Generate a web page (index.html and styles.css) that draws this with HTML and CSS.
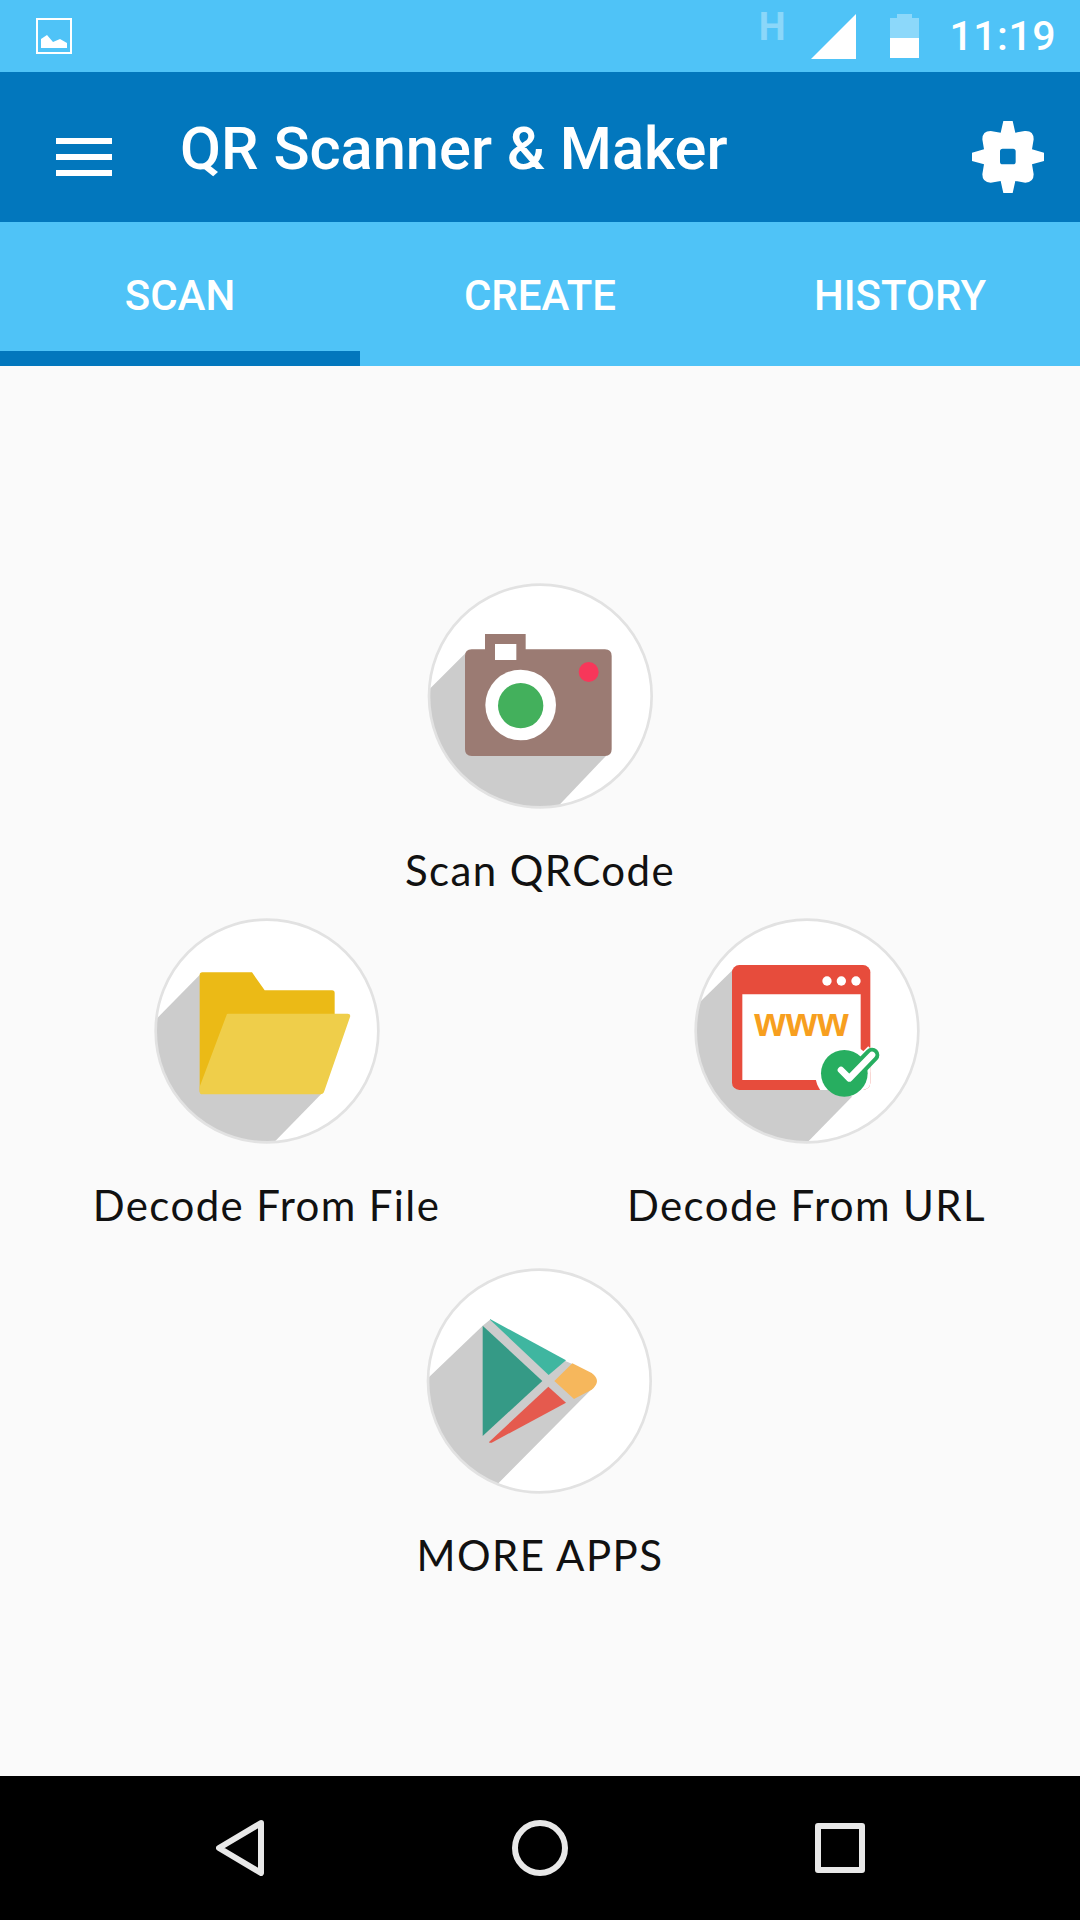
FILE: index.html
```html
<!DOCTYPE html>
<html lang="en">
<head>
  <meta charset="UTF-8">
  <title>QR Scanner &amp; Maker</title>
  <link rel="stylesheet" href="styles.css">
</head>
<body>

  <div class="status-bar">
    <svg class="ic-image" viewBox="0 0 36 36"><path class="ic-image-frame" d="M1 1h34v34H1z"/><path class="ic-white" d="M5 30V21l6-4 6 7 7-3 7 4v5z"/></svg>
    <span class="status-h">H</span>
    <svg class="ic-signal" viewBox="0 0 45 45"><path class="ic-white" d="M45 0v45H0z"/></svg>
    <svg class="ic-battery" viewBox="0 0 29 44"><path class="ic-battery-empty" d="M7 0h15v4h7v20H0V4h7z"/><path class="ic-white" d="M0 24h29v20H0z"/></svg>
    <span class="status-time">11:19</span>
  </div>

  <header class="app-bar">
    <div class="menu-btn"><span></span><span></span><span></span></div>
    <h1 class="app-title">QR Scanner &amp; Maker</h1>
    <svg class="ic-gear" viewBox="0 0 216 216"><path class="ic-white" fill-rule="evenodd" d="M94 0h28l8 35 28-5q27-2 27 25l-5 30 36 10v25l-36 10 5 30q0 25-25 25l-30-5-8 36H94l-8-36-30 5q-25 0-25-25l5-30-36-10V95l36-10-5-30q0-25 25-25l30 5zM92 83q-8 0-8 8v31q0 8 8 8h31q8 0 8-8V91q0-8-8-8z"/></svg>
  </header>

  <nav class="tabs">
    <div class="tab tab-active">SCAN</div>
    <div class="tab">CREATE</div>
    <div class="tab">HISTORY</div>
  </nav>

  <main class="content">
    <div class="row">
      <div class="action">
        <svg class="action-icon" viewBox="0 0 780 750">
          <clipPath id="clipCamera"><circle cx="391" cy="378" r="334"/></clipPath>
          <circle class="disc" cx="391" cy="378" r="334"/>
          <path class="shade" clip-path="url(#clipCamera)" d="M58 358 170 246 600 545 445 708 200 760 0 500z"/>
          <circle class="disc-line" cx="391" cy="378" r="334"/>
          <path fill="#9b7b73" d="M225 192h122v46h238q20 0 20 20v280q0 20-20 20H185q-20 0-20-20V258q0-20 20-20h40z"/>
          <path fill="#fff" d="M255 222h64v48h-64z"/>
          <circle fill="#fff" cx="332" cy="405" r="106"/>
          <circle fill="#43b05c" cx="332" cy="407" r="68"/>
          <circle fill="#f7375a" cx="536" cy="306" r="30"/>
        </svg>
        <div class="action-label">Scan QRCode</div>
      </div>
    </div>

    <div class="row row-two">
      <div class="action">
        <svg class="action-icon" viewBox="-10 0 780 750">
          <clipPath id="clipFolder"><circle cx="380" cy="378" r="334"/></clipPath>
          <circle class="disc" cx="380" cy="378" r="334"/>
          <path class="shade" clip-path="url(#clipFolder)" d="M48 342 180 208 545 565 405 708 200 760 0 500z"/>
          <circle class="disc-line" cx="380" cy="378" r="334"/>
          <path fill="#ebba16" d="M186 202h149l38 54h202q8 0 8 8v70L178 560V210q0-8 8-8z"/>
          <path fill="#efce4a" d="M262 326h360q10 0 7 10l-77 222q-3 10-12 10H186q-8 0-8-8v-15l80-213q1-6 4-6z"/>
        </svg>
        <div class="action-label">Decode From File</div>
      </div>
      <div class="action">
        <svg class="action-icon" viewBox="-10 0 780 750">
          <clipPath id="clipWeb"><circle cx="380" cy="378" r="334"/></clipPath>
          <clipPath id="clipWindow"><rect x="155" y="180" width="415" height="375" rx="22"/></clipPath>
          <circle class="disc" cx="380" cy="378" r="334"/>
          <path class="shade" clip-path="url(#clipWeb)" d="M55 295 160 192 515 575 385 708 200 760 0 500z"/>
          <circle class="disc-line" cx="380" cy="378" r="334"/>
          <rect fill="#e74c3c" x="155" y="180" width="415" height="375" rx="22"/>
          <path fill="#fff" d="M186 268h355v257H186z"/>
          <circle fill="#fff" cx="440" cy="228" r="14"/>
          <circle fill="#fff" cx="483" cy="228" r="14"/>
          <circle fill="#fff" cx="527" cy="228" r="14"/>
          <text class="www" x="222" y="393" textLength="283" lengthAdjust="spacingAndGlyphs">www</text>
          <g clip-path="url(#clipWindow)">
            <circle fill="#fff" cx="492" cy="505" r="88"/>
            <path fill="none" stroke="#fff" stroke-width="60" d="M515 515 585 445"/>
          </g>
          <circle fill="#27ae60" cx="492" cy="505" r="70"/>
          <path fill="none" stroke="#27ae60" stroke-width="44" stroke-linecap="round" stroke-linejoin="round" d="M482 495l25 25 68-70"/>
          <path fill="none" stroke="#fff" stroke-width="20" stroke-linecap="round" stroke-linejoin="round" d="M482 495l25 25 68-70"/>
        </svg>
        <div class="action-label">Decode From URL</div>
      </div>
    </div>

    <div class="row">
      <div class="action">
        <svg class="action-icon" viewBox="0 0 780 750">
          <clipPath id="clipPlay"><circle cx="388" cy="378" r="334"/></clipPath>
          <circle class="disc" cx="388" cy="378" r="334"/>
          <path class="shade" clip-path="url(#clipPlay)" d="M55 368 218 212 240 194 466 318 487 327 545 356 552 395 265 685 200 760 0 500z"/>
          <circle class="disc-line" cx="388" cy="378" r="334"/>
          <path fill="#359a86" d="M218 212 397 378 218 543z"/>
          <path fill="#3fb6a0" d="M240 192 468 316 416 360 240 194z"/>
          <path fill="#f6b75c" d="M487 325 545 354Q577 378 545 404L492 432 433 378z"/>
          <path fill="#e55a4e" d="M415 395 468 443 245 563Q235 565 238 560z"/>
        </svg>
        <div class="action-label">MORE APPS</div>
      </div>
    </div>
  </main>

  <footer class="nav-bar">
    <svg class="nav-back" viewBox="0 0 48 56"><path class="nav-stroke" d="M45 3 3 28 45 53z"/></svg>
    <svg class="nav-home" viewBox="0 0 56 56"><circle class="nav-stroke" cx="28" cy="28" r="25"/></svg>
    <svg class="nav-recent" viewBox="0 0 50 50"><path class="nav-stroke" d="M3 3h44v44H3z"/></svg>
  </footer>

</body>
</html>
```

FILE: styles.css
```css
* {
  box-sizing: border-box;
}

body {
  margin: 0;
  width: 1080px;
  height: 1920px;
  display: flex;
  flex-direction: column;
  font-family: Roboto, sans-serif;
  background-color: #fafafa;
  overflow: hidden;
}

.ic-white {
  fill: #fff;
}

/* status bar */
.status-bar {
  height: 72px;
  display: flex;
  align-items: center;
  padding: 0 24px 0 36px;
  background-color: #4fc3f7;
  color: #fff;
}

.ic-image {
  width: 36px;
  height: 36px;
  margin-right: auto;
}

.ic-image-frame {
  fill: none;
  stroke: #fff;
  stroke-width: 2;
}

.status-h {
  font-size: 38px;
  font-weight: 700;
  line-height: 28px;
  color: rgba(255, 255, 255, 0.35);
  margin: -18px 26px 0 0;
}

.ic-signal {
  width: 45px;
  height: 45px;
  margin: 0 34px 0 0;
}

.ic-battery {
  width: 29px;
  height: 44px;
  margin: 0 30px 0 0;
}

.ic-battery-empty {
  fill: rgba(255, 255, 255, 0.35);
}

.status-time {
  font-size: 41px;
  font-weight: 500;
  letter-spacing: 0.5px;
}

/* app bar */
.app-bar {
  height: 150px;
  display: flex;
  align-items: center;
  padding: 0 36px 0 56px;
  background-color: #0277bd;
}

.menu-btn {
  width: 56px;
  display: flex;
  flex-direction: column;
  gap: 10px;
  margin: 20px 68px 0 0;
}

.menu-btn span {
  height: 6px;
  background-color: #fff;
}

.app-title {
  margin: 4px 0 0;
  font-size: 59.6px;
  font-weight: 500;
  color: #fff;
  flex: 1;
}

.ic-gear {
  width: 72px;
  height: 72px;
  margin-top: 20px;
}

/* tabs */
.tabs {
  height: 144px;
  display: grid;
  grid-template-columns: repeat(3, 1fr);
  background-color: #4fc3f7;
}

.tab {
  display: flex;
  align-items: center;
  justify-content: center;
  padding-top: 18px;
  font-size: 42px;
  font-weight: 500;
  color: #fff;
  border-bottom: 15px solid transparent;
}

.tab-active {
  border-bottom-color: #0277bd;
}

/* actions */
.content {
  flex: 1;
  display: flex;
  flex-direction: column;
  padding-top: 204px;
}

.row {
  display: flex;
  justify-content: center;
  height: 335px;
}

.row:last-child {
  height: auto;
}

.row-two {
  display: grid;
  grid-template-columns: 533px 547px;
  height: 350px;
}

.action {
  display: flex;
  flex-direction: column;
  align-items: center;
}

.action-icon {
  width: 260px;
  height: 250px;
  display: block;
}

.action-label {
  font-family: Lato, sans-serif;
  font-size: 42px;
  letter-spacing: 1.4px;
  line-height: 50px;
  margin-top: 25px;
  color: #111;
  white-space: nowrap;
}

.disc {
  fill: #fff;
}

.disc-line {
  fill: none;
  stroke: #e2e2e2;
  stroke-width: 8;
}

.shade {
  fill: #ccc;
}

.www {
  font-family: "Liberation Sans", sans-serif;
  font-weight: 700;
  font-size: 120px;
  fill: #f79f1f;
}

/* nav bar */
.nav-bar {
  height: 144px;
  display: flex;
  align-items: center;
  background-color: #000;
  padding-left: 216px;
}

.nav-stroke {
  fill: none;
  stroke: #e8e8e8;
  stroke-width: 6;
  stroke-linejoin: round;
}

.nav-back {
  width: 48px;
  height: 56px;
  margin-right: 248px;
}

.nav-home {
  width: 56px;
  height: 56px;
  margin-right: 247px;
}

.nav-recent {
  width: 50px;
  height: 50px;
}
```
